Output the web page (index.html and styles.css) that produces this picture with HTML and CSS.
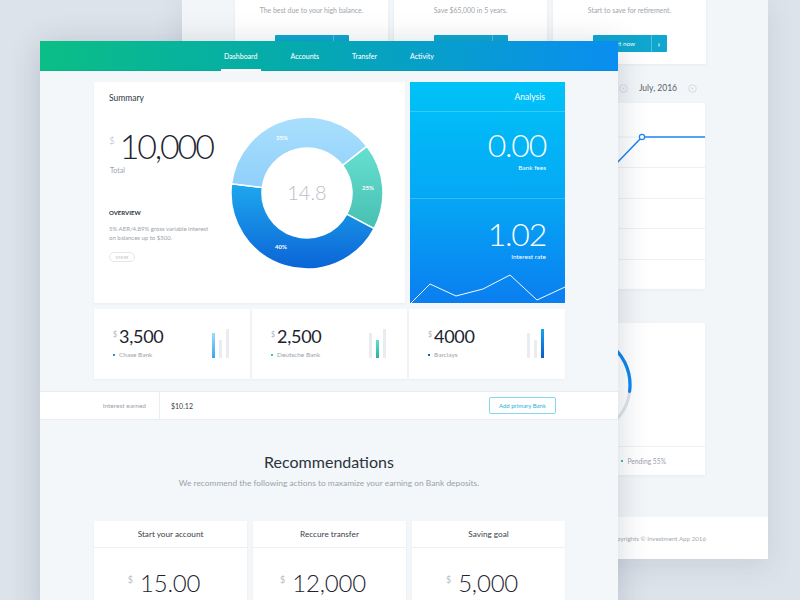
FILE: index.html
```html
<!DOCTYPE html>
<html lang="en">
<head>
<meta charset="utf-8">
<title>Investment App – Dashboard</title>
<link rel="stylesheet" href="styles.css">
</head>
<body>
<div class="desk">

  <section class="back-page">
    <div class="back-cards">
      <div class="bcard">
        <p class="bcard-text">The best due to your high balance.</p>
        <div class="split-btn"><span class="split-main">Open now</span><span class="split-arrow">&#8250;</span></div>
      </div>
      <div class="bcard">
        <p class="bcard-text">Save $65,000 in 5 years.</p>
        <div class="split-btn"><span class="split-main">Set goal</span><span class="split-arrow">&#8250;</span></div>
      </div>
      <div class="bcard">
        <p class="bcard-text">Start to save for retirement.</p>
        <div class="split-btn"><span class="split-main">Start now</span><span class="split-arrow">&#8250;</span></div>
      </div>
    </div>

    <div class="back-main">
      <div class="back-left"></div>
      <div class="back-right">
        <div class="month-nav">
          <svg class="circ-arrow" width="9" height="9" viewBox="0 0 9 9"><circle cx="4.5" cy="4.5" r="3.8" fill="none" stroke="#cdd3da" stroke-width="0.8"/><path d="M5.3 3 L3.5 4.5 L5.3 6 Z" fill="#cdd3da"/></svg>
          <span class="month-label">July, 2016</span>
          <svg class="circ-arrow" width="9" height="9" viewBox="0 0 9 9"><circle cx="4.5" cy="4.5" r="3.8" fill="none" stroke="#cdd3da" stroke-width="0.8"/><path d="M3.7 3 L5.5 4.5 L3.7 6 Z" fill="#cdd3da"/></svg>
        </div>
        <div class="chart-card">
          <div class="chart-top">
            <svg width="252" height="64" viewBox="0 0 252 64">
              <line x1="0" y1="34" x2="252" y2="34" stroke="#eef1f4" stroke-width="1"/>
              <path d="M130 95 L189 34 L252 34" fill="none" stroke="#1c86ef" stroke-width="1.5"/>
              <circle cx="189" cy="34" r="2.6" fill="#fff" stroke="#1c86ef" stroke-width="1.2"/>
            </svg>
          </div>
          <div class="chart-row"></div>
          <div class="chart-row"></div>
          <div class="chart-row"></div>
          <div class="chart-row"></div>
        </div>
        <div class="ring-card">
          <div class="ring-body">
            <svg width="108" height="108" viewBox="0 0 108 108">
              <circle cx="54" cy="54" r="51" fill="none" stroke="#dfe4ea" stroke-width="3"/>
              <circle cx="54" cy="54" r="51" fill="none" stroke="#0a86f0" stroke-width="3.2" stroke-linecap="round" stroke-dasharray="139.7 400" transform="rotate(210 54 54)"/>
            </svg>
          </div>
          <div class="ring-legend">
            <span class="legend-item"><i class="ldot ldot-blue"></i>Completed 45%</span>
            <span class="legend-item"><i class="ldot ldot-green"></i>Pending 55%</span>
          </div>
        </div>
      </div>
    </div>

    <footer class="back-footer">Copyrights © Investment App 2016</footer>
  </section>

  <section class="front-page">
    <header class="topbar">
      <nav class="nav">
        <a class="nav-item active">Dashboard</a>
        <a class="nav-item">Accounts</a>
        <a class="nav-item">Transfer</a>
        <a class="nav-item">Activity</a>
      </nav>
    </header>

    <main class="content">
      <div class="top-row">
        <div class="summary-card">
          <h3 class="card-title">Summary</h3>
          <div class="summary-body">
            <div class="summary-info">
              <div class="big-amount"><span class="cur-big">$</span><span class="big-num">10,000</span></div>
              <div class="total-label">Total</div>
              <div class="overview-title">OVERVIEW</div>
              <p class="overview-text">5% AER/4.89% gross variable interest<br>on balances up to $500.</p>
              <button class="view-btn">VIEW</button>
            </div>
            <svg class="donut" width="152" height="152" viewBox="0 0 152 152">
              <defs>
                <linearGradient id="gLight" x1="0" y1="0" x2="0" y2="1">
                  <stop offset="0" stop-color="#aadffd"/>
                  <stop offset="1" stop-color="#8fd0fa"/>
                </linearGradient>
                <linearGradient id="gTeal" x1="0" y1="0" x2="0" y2="1">
                  <stop offset="0" stop-color="#67dfd1"/>
                  <stop offset="1" stop-color="#47c0b2"/>
                </linearGradient>
                <linearGradient id="gBlue" x1="0" y1="0" x2="0" y2="1">
                  <stop offset="0" stop-color="#1ea8ee"/>
                  <stop offset="1" stop-color="#0b64d6"/>
                </linearGradient>
              </defs>
              <path d="M135.89 29.21 A76 76 0 0 1 143.10 111.68 L115.73 97.13 A45 45 0 0 0 111.46 48.29 Z" fill="url(#gTeal)" stroke="#fff" stroke-width="1.5" stroke-linejoin="round"/>
              <path d="M143.10 111.68 A76 76 0 0 1 0.57 66.74 L31.34 70.51 A45 45 0 0 0 115.73 97.13 Z" fill="url(#gBlue)" stroke="#fff" stroke-width="1.5" stroke-linejoin="round"/>
              <path d="M0.57 66.74 A76 76 0 0 1 135.89 29.21 L111.46 48.29 A45 45 0 0 0 31.34 70.51 Z" fill="url(#gLight)" stroke="#fff" stroke-width="1.5" stroke-linejoin="round"/>
              <text class="pct" x="51" y="23" text-anchor="middle">35%</text>
              <text class="pct" x="137" y="73" text-anchor="middle">25%</text>
              <text class="pct" x="50" y="132" text-anchor="middle">40%</text>
              <text class="donut-center" x="76" y="83" text-anchor="middle">14.8</text>
            </svg>
          </div>
        </div>

        <div class="analysis">
          <div class="an-head">Analysis</div>
          <div class="an-block an-fees">
            <div class="an-num">0.00</div>
            <div class="an-label">Bank fees</div>
          </div>
          <div class="an-block an-rate">
            <div class="an-num">1.02</div>
            <div class="an-label">Interest rate</div>
            <svg class="an-chart" width="155" height="33" viewBox="0 0 155 33" preserveAspectRatio="none">
              <polyline points="1,33 20,14 46,26 73,19 100,5 127,30 155,17" fill="none" stroke="#fff" stroke-width="1" stroke-opacity="0.95"/>
            </svg>
          </div>
        </div>
      </div>

      <div class="banks">
        <div class="bank">
          <div class="bank-info">
            <div class="bank-amt"><span class="cur">$</span><span class="bank-num">3,500</span></div>
            <div class="bank-name"><i class="bdot bdot-light"></i>Chase Bank</div>
          </div>
          <div class="bars"><i class="bar b1 on-light"></i><i class="bar b2"></i><i class="bar b3"></i></div>
        </div>
        <div class="bank">
          <div class="bank-info">
            <div class="bank-amt"><span class="cur">$</span><span class="bank-num">2,500</span></div>
            <div class="bank-name"><i class="bdot bdot-teal"></i>Deutsche Bank</div>
          </div>
          <div class="bars"><i class="bar b1"></i><i class="bar b2 on-teal"></i><i class="bar b3"></i></div>
        </div>
        <div class="bank">
          <div class="bank-info">
            <div class="bank-amt"><span class="cur">$</span><span class="bank-num">4000</span></div>
            <div class="bank-name"><i class="bdot bdot-blue"></i>Barclays</div>
          </div>
          <div class="bars"><i class="bar b1"></i><i class="bar b2"></i><i class="bar b3 on-blue"></i></div>
        </div>
      </div>
    </main>

    <div class="interest-bar">
      <div class="ie-label">Interest earned</div>
      <div class="ie-value">$10.12</div>
      <button class="btn-outline">Add primary Bank</button>
    </div>

    <section class="recs">
      <h2 class="recs-title">Recommendations</h2>
      <p class="recs-sub">We recommend the following actions to maxamize your earning on Bank deposits.</p>
      <div class="rec-grid">
        <div class="rec-card">
          <div class="rec-head">Start your account</div>
          <div class="rec-amount"><span class="rec-cur">$</span><span class="rec-num">15.00</span></div>
        </div>
        <div class="rec-card">
          <div class="rec-head">Reccure transfer</div>
          <div class="rec-amount"><span class="rec-cur">$</span><span class="rec-num">12,000</span></div>
        </div>
        <div class="rec-card">
          <div class="rec-head">Saving goal</div>
          <div class="rec-amount"><span class="rec-cur">$</span><span class="rec-num">5,000</span></div>
        </div>
      </div>
    </section>
  </section>

</div>
</body>
</html>
```

FILE: styles.css
```css
* { box-sizing: border-box; margin: 0; padding: 0; }

html, body {
  width: 800px;
  height: 600px;
  overflow: hidden;
}

body {
  background: #dde3ea;
  font-family: Lato, "Open Sans", sans-serif;
  color: #2b333e;
}

.desk {
  position: relative;
  width: 800px;
  height: 600px;
  overflow: hidden;
}

/* ---------- back page (window behind) ---------- */
.back-page {
  position: absolute;
  left: 182px;
  top: 0;
  width: 586px;
  height: 559px;
  background: #f3f6f8;
  box-shadow: 0 6px 26px rgba(60, 80, 105, 0.13);
  display: flex;
  flex-direction: column;
}

.back-cards {
  display: grid;
  grid-template-columns: repeat(3, 153px);
  column-gap: 6px;
  padding-left: 53px;
  height: 64px;
}

.bcard {
  background: #fff;
  box-shadow: 0 1px 3px rgba(40, 60, 80, 0.06);
  display: flex;
  flex-direction: column;
  align-items: center;
  padding-top: 5px;
}

.bcard-text {
  font-size: 6.9px;
  line-height: 10px;
  color: #9ea6ae;
}

.split-btn {
  margin-top: 20px;
  display: flex;
  width: 74px;
  height: 17px;
  background: #0fa7cf;
  color: #fff;
  font-size: 6.3px;
  border-radius: 1px;
}

.split-main {
  flex: 1;
  display: flex;
  align-items: center;
  justify-content: center;
  border-right: 1px solid rgba(255, 255, 255, 0.3);
}

.split-arrow {
  width: 15px;
  display: flex;
  align-items: center;
  justify-content: center;
  font-size: 8px;
  font-weight: 700;
}

.back-main {
  display: grid;
  grid-template-columns: 212px 252px;
  column-gap: 6px;
  padding-left: 53px;
}

.month-nav {
  height: 39px;
  padding-top: 9px;
  padding-right: 8px;
  display: flex;
  justify-content: flex-end;
  align-items: center;
  gap: 11px;
}

.month-label {
  font-size: 8.5px;
  color: #58616c;
}

.chart-card {
  background: #fff;
  box-shadow: 0 1px 3px rgba(40, 60, 80, 0.06);
}

.chart-top {
  height: 64px;
}

.chart-top svg { display: block; }

.chart-row {
  height: 30.5px;
  border-top: 1px solid #eef1f4;
}

.ring-card {
  margin-top: 34px;
  background: #fff;
  box-shadow: 0 1px 3px rgba(40, 60, 80, 0.06);
}

.ring-body {
  height: 123px;
  display: flex;
  align-items: center;
  justify-content: center;
}

.ring-legend {
  height: 29px;
  border-top: 1px solid #eef1f4;
  display: flex;
  justify-content: flex-end;
  align-items: center;
  gap: 22px;
  padding-right: 39px;
  font-size: 6.7px;
  color: #9aa2ab;
}

.legend-item {
  display: flex;
  align-items: center;
  gap: 5px;
}

.ldot {
  width: 2px;
  height: 2px;
  display: block;
}

.ldot-blue { background: #0a86f0; }
.ldot-green { background: #3ec77f; }

.back-footer {
  margin-top: auto;
  height: 42px;
  background: #fff;
  display: flex;
  align-items: center;
  justify-content: flex-end;
  padding-right: 62px;
  font-size: 6.2px;
  color: #a3aab2;
}

/* ---------- front page ---------- */
.front-page {
  position: absolute;
  left: 40px;
  top: 41px;
  width: 578px;
  height: 575px;
  background: #f4f7f9;
  box-shadow: 0 4px 30px rgba(30, 50, 80, 0.2);
}

.topbar {
  height: 30px;
  background: linear-gradient(90deg, #0bbe85 0%, #05abab 42%, #0a8ef1 100%);
  display: flex;
  justify-content: center;
  border-bottom: 1px solid rgba(0, 60, 120, 0.08);
}

.nav {
  display: flex;
  gap: 27px;
}

.nav-item {
  height: 30px;
  padding: 2px 3px 0;
  display: flex;
  align-items: center;
  font-size: 7px;
  font-weight: 500;
  color: #fff;
  border-bottom: 2px solid transparent;
}

.nav-item.active {
  border-bottom-color: #fff;
}

.content {
  padding: 11px 0 0 54px;
}

.top-row {
  display: flex;
  gap: 5px;
  height: 221px;
}

.summary-card {
  width: 311px;
  background: #fff;
  box-shadow: 0 1px 2px rgba(40, 60, 80, 0.05);
  padding: 10px 22px 0 15px;
}

.card-title {
  font-size: 8.5px;
  font-weight: 400;
  line-height: 12px;
  color: #2f3640;
}

.summary-body {
  margin-top: 13px;
  display: flex;
}

.summary-info {
  flex: 1;
}

.big-amount {
  margin-top: 12px;
  display: flex;
  align-items: flex-start;
}

.cur-big {
  font-size: 10px;
  line-height: 10px;
  margin-top: 6px;
  color: #aab2bb;
  font-weight: 300;
}

.big-num {
  margin-left: 5px;
  font-size: 34px;
  line-height: 34px;
  font-weight: 300;
  letter-spacing: -2.2px;
  color: #1d2430;
}

.total-label {
  margin-top: 2px;
  padding-left: 1px;
  font-size: 7px;
  line-height: 10px;
  color: #9aa2ab;
}

.overview-title {
  margin-top: 33px;
  font-size: 6px;
  line-height: 10px;
  font-weight: 700;
  color: #2b333e;
}

.overview-text {
  margin-top: 6px;
  font-size: 6px;
  line-height: 9px;
  color: #9aa2ab;
}

.view-btn {
  margin-top: 10px;
  display: block;
  width: 26px;
  height: 10px;
  border: 1px solid #e3e7eb;
  border-radius: 5px;
  background: #fff;
  font-family: inherit;
  font-size: 4.5px;
  letter-spacing: 0.4px;
  color: #b0b7bf;
}

.donut { display: block; flex: none; }

.pct {
  font-size: 6px;
  font-weight: 700;
  fill: #fff;
}

.donut-center {
  font-size: 20px;
  font-weight: 300;
  fill: #b8c0ca;
}

/* analysis panel */
.analysis {
  width: 155px;
  background: linear-gradient(180deg, #00c3f8 0%, #05a9f5 50%, #0a7ef0 100%);
  color: #fff;
  display: flex;
  flex-direction: column;
}

.an-head {
  height: 30px;
  line-height: 30px;
  text-align: right;
  padding-right: 20px;
  font-size: 8.5px;
  border-bottom: 1px solid rgba(255, 255, 255, 0.22);
}

.an-block {
  text-align: right;
  display: flex;
  flex-direction: column;
}

.an-fees {
  height: 87px;
  padding-top: 17px;
  border-bottom: 1px solid rgba(255, 255, 255, 0.22);
}

.an-rate {
  flex: 1;
  padding-top: 19px;
}

.an-num {
  padding-right: 19px;
  font-size: 32px;
  line-height: 32px;
  font-weight: 300;
  letter-spacing: -1.2px;
}

.an-label {
  padding-right: 19px;
  margin-top: 2px;
  font-size: 6.5px;
  line-height: 10px;
}

.an-chart {
  display: block;
  margin-top: auto;
}

/* bank cards */
.banks {
  margin-top: 6px;
  display: grid;
  grid-template-columns: 156px 155px 156px;
  gap: 2px;
}

.bank {
  height: 70px;
  background: #fff;
  box-shadow: 0 1px 2px rgba(40, 60, 80, 0.05);
  display: flex;
  justify-content: space-between;
  align-items: flex-start;
  padding: 18px 21px 0 19px;
}

.bank-amt {
  display: flex;
  align-items: flex-start;
}

.cur {
  font-size: 7px;
  line-height: 8px;
  margin-top: 3px;
  color: #aab2bb;
}

.bank-num {
  margin-left: 2px;
  font-size: 18px;
  line-height: 18px;
  letter-spacing: -0.3px;
  color: #1d2430;
}

.bank-name {
  margin-top: 6px;
  display: flex;
  align-items: center;
  gap: 4px;
  font-size: 6.5px;
  line-height: 8px;
  color: #9aa2ab;
}

.bdot {
  display: block;
  width: 2px;
  height: 2px;
}

.bdot-light { background: #2f8ff0; }
.bdot-teal { background: #39c5b5; }
.bdot-blue { background: #0b5fd2; }

.bars {
  margin-top: 2px;
  height: 29px;
  display: flex;
  align-items: flex-end;
  gap: 4px;
}

.bar {
  display: block;
  width: 3px;
  background: #e9ecf0;
}

.b1 { height: 25px; }
.b2 { height: 18px; }
.b3 { height: 29px; }

.on-light { background: linear-gradient(180deg, #9fdafd, #3aa5f5); }
.on-teal { background: linear-gradient(180deg, #62dccc, #2bb2a3); }
.on-blue { background: linear-gradient(180deg, #14a3ef, #0a5bcf); }

/* interest bar */
.interest-bar {
  margin-top: 12px;
  height: 29px;
  background: #fff;
  border-top: 1px solid #e9edf1;
  border-bottom: 1px solid #e9edf1;
  display: flex;
  align-items: center;
}

.ie-label {
  width: 120px;
  height: 100%;
  display: flex;
  align-items: center;
  justify-content: flex-end;
  padding-right: 13px;
  border-right: 1px solid #e9edf1;
  font-size: 6.5px;
  color: #9aa2ab;
}

.ie-value {
  flex: 1;
  padding-left: 11px;
  font-size: 7px;
  color: #3a424c;
}

.btn-outline {
  margin-right: 62px;
  width: 67px;
  height: 17px;
  border: 1px solid #86d8ec;
  border-radius: 2px;
  background: #fff;
  font-family: inherit;
  font-size: 6px;
  color: #24b2d6;
}

/* recommendations */
.recs {
  padding-top: 32px;
  text-align: center;
}

.recs-title {
  font-size: 16px;
  line-height: 20px;
  font-weight: 400;
  color: #2b333e;
}

.recs-sub {
  margin-top: 6px;
  font-size: 8.4px;
  line-height: 10px;
  color: #9aa2ab;
}

.rec-grid {
  margin-top: 33px;
  padding-left: 54px;
  display: grid;
  grid-template-columns: repeat(3, 153px);
  gap: 6px;
}

.rec-card {
  height: 120px;
  background: #fff;
  box-shadow: 0 1px 2px rgba(40, 60, 80, 0.05);
}

.rec-head {
  height: 27px;
  line-height: 26px;
  border-bottom: 1px solid #eef1f4;
  font-size: 8.2px;
  color: #39414b;
}

.rec-amount {
  padding: 23px 13px 0 0;
  display: flex;
  justify-content: center;
  align-items: flex-start;
}

.rec-cur {
  font-size: 9px;
  line-height: 10px;
  margin-top: 4px;
  color: #b4bcc6;
}

.rec-num {
  margin-left: 7px;
  font-size: 24px;
  line-height: 24px;
  font-weight: 300;
  letter-spacing: -0.2px;
  color: #1d2531;
}
```
